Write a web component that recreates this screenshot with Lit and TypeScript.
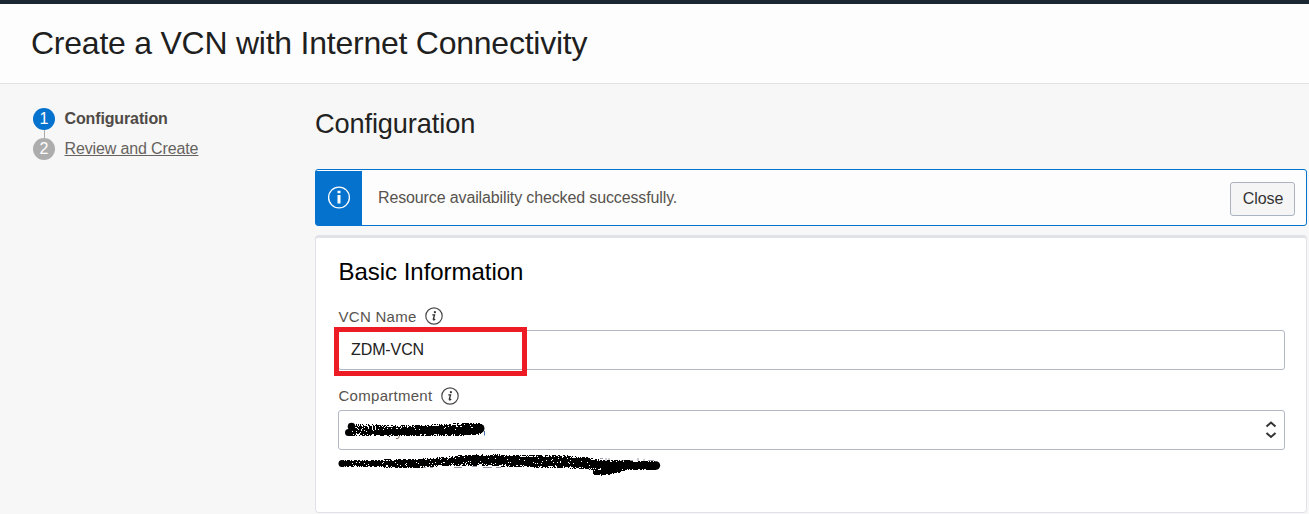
import { LitElement, html, svg, css } from "lit";
import { customElement } from "lit/decorators.js";

const infoIcon = html`<svg class="info" viewBox="0 0 18 18" width="18" height="18">
  <circle cx="9" cy="9" r="8.2" fill="none" stroke="#4a4a4a" stroke-width="1.2" />
  <circle cx="9.9" cy="5.2" r="1.1" fill="#333" />
  <path d="M7.3 7.9h2.2L8.400 12.100q-.2 1 .6.7l1.200-.7" fill="none" stroke="#333" stroke-width="1.400" />
</svg>`;

// Redaction marks: a dense core with a deterministic rough grain at its edges.
type Pt = [number, number, number, number]; // x, y, half height, density
const grain = (pts: Pt[], seed: number) => {
  let s = seed;
  const rnd = () => (s = (s * 16807) % 2147483647) / 2147483647;
  for (let i = 0; i < 8; i++) rnd();
  let d = "";
  for (let i = 0; i < pts.length - 1; i++) {
    const [x0, y0, h0, k0] = pts[i];
    const [x1, y1, h1, k1] = pts[i + 1];
    for (let x = x0; x < x1; x++) {
      const t = (x - x0) / (x1 - x0);
      const y = y0 + (y1 - y0) * t, h = h0 + (h1 - h0) * t, k = k0 + (k1 - k0) * t;
      for (let yy = Math.round(y - h); yy < Math.round(y + h); yy++) {
        const edge = Math.abs(yy + 0.5 - y) / h;
        if (rnd() < (edge > 0.72 ? k * k * 0.7 : k)) d += `M${x} ${yy}h1v1h-1z`;
      }
    }
  }
  return svg`<path d=${d} fill="#000" shape-rendering="crispEdges" />`;
};

const nameMark: Pt[] = [[10, 14, 6, 0.9], [16, 14, 6, 0.85], [32, 14, 6, 0.82], [50, 15, 5.5, 0.88], [80, 14.5, 5.5, 0.9], [105, 14, 6, 0.9], [125, 13, 6.5, 0.95], [143, 12.5, 5.500, 1]];
const nameCore: Pt[] = [[24, 16, 3, 0.8], [42, 16, 3, 0.95], [75, 16, 3, 0.95], [110, 15, 3.500, 0.97], [140, 15, 3.500, 1]];
const pathMark: Pt[] = [[3, 13.5, 3.500, 1], [12, 13.500, 3.500, 0.95], [45, 13.500, 4, 0.94], [78, 13.500, 4.500, 0.95], [105, 11.500, 4.500, 0.94], [128, 10, 5.500, 0.96], [162, 10.500, 6, 0.97], [230, 12, 6.500, 0.95], [250, 13.500, 6, 0.98], [265, 15, 5, 1], [318, 15.500, 4.500, 1]];
const tailMark: Pt[] = [[255, 22, 2.500, 0.93], [263, 22.500, 3, 0.95], [275, 21, 3, 0.95], [287, 19, 2, 0.9]];

@customElement("app-root")
export class AppRoot extends LitElement {
  static styles = css`
    :host { display: block; height: 514px; overflow: hidden; background: #f7f7f7; font: 16px/20px "Liberation Sans", Arial, sans-serif; color: #222; }
    * { box-sizing: border-box; }
    h1, h2, h3 { margin: 0; font-weight: 400; }
    header { height: 84px; border-top: 4px solid #1b2733; border-bottom: 1px solid #e2e2e2; background: #fdfdfd; padding: 21px 0 0 31px; }
    h1 { font-size: 32px; line-height: 37px; letter-spacing: -.24px; color: #1f1f1f; }
    .body { display: grid; grid-template-columns: 315px 992px; }
    nav { padding: 24px 0 0 33px; }
    .step { display: flex; align-items: center; gap: 9.5px; height: 22px; }
    .num { width: 22px; height: 22px; border-radius: 50%; background: #0572ce; color: #fff; text-align: center; line-height: 22px; }
    .num.off { background: #adadad; }
    .on { font-weight: 700; color: #4f4a46; letter-spacing: -.13px; }
    .line { width: 1px; height: 8px; margin-left: 11px; background: #aaa; }
    .link { color: #66625e; text-decoration: underline; letter-spacing: -.13px; }
    h2 { font-size: 27.2px; line-height: 32px; margin-top: 24px; letter-spacing: -.12px; }
    .alert { display: flex; align-items: center; height: 57px; margin-top: 29px; border: 1px solid #0572ce; border-radius: 3px; background: #fdfdfd; padding-right: 11px; }
    .badge { display: flex; align-items: center; justify-content: center; width: 46px; height: 54px; align-self: flex-end; background: #0572ce; }
    .msg { flex: 1; margin-left: 16px; color: #57534e; letter-spacing: -.13px; }
    button { width: 65px; height: 34px; margin-top: 2px; padding: 0 0 0 1px; border: 1px solid #a9b3c1; border-radius: 3px; background: #f5f5f5; font: inherit; color: #333; letter-spacing: -.1px; }
    .card { height: 278px; margin-top: 9px; border: 1px solid #e1e2e8; border-top-width: 3px; border-radius: 4px; background: #fff; padding: 20px 21px 0 22px; }
    h3 { font-size: 24px; line-height: 28px; color: #000; letter-spacing: -.03px; margin-left: .5px; }
    .label { display: flex; align-items: center; gap: 9px; height: 20px; font-size: 15px; letter-spacing: .28px; color: #57534e; }
    .label span { margin-left: .5px; margin-right: -.5px; }
    .first { margin-top: 20px; }
    .first span { padding-top: 2px; }
    .second { margin-top: 16px; }
    .field { position: relative; display: flex; align-items: center; justify-content: space-between; height: 40px; margin-top: 4px; border: 1px solid #b1b8c4; border-radius: 3px; padding: 0 7px 0 12px; color: #222; letter-spacing: -.1px; }
    .frame { position: absolute; left: -5px; top: -4px; width: 193px; height: 49px; border: 5px solid #ed1c24; }
    .select { padding: 0 7px 1px 0; }
    svg { display: block; }
  `;

  render() {
    return html`
      <header><h1>Create a VCN with Internet Connectivity</h1></header>
      <div class="body">
        <nav>
          <div class="step"><span class="num">1</span><span class="on">Configuration</span></div>
          <div class="line"></div>
          <div class="step"><span class="num off">2</span><span class="link">Review and Create</span></div>
        </nav>
        <main>
          <h2>Configuration</h2>
          <div class="alert">
            <div class="badge">
              <svg width="24" height="24" viewBox="0 0 24 24" fill="none" stroke="#fff">
                <circle cx="12" cy="11.5" r="10.4" stroke-width="1.3" />
                <path d="M12 4.800v2.500M12 9v8.600" stroke-width="3" />
              </svg>
            </div>
            <span class="msg">Resource availability checked successfully.</span>
            <button>Close</button>
          </div>
          <section class="card">
            <h3>Basic Information</h3>
            <div class="label first"><span>VCN Name</span>${infoIcon}</div>
            <div class="field"><span>ZDM-VCN</span><span class="frame"></span></div>
            <div class="label second"><span>Compartment</span>${infoIcon}</div>
            <div class="field select">
              <svg width="155" height="28" viewBox="0 0 155 28">
                <path d="M60 20v1.500q-1 1.500-3 1" fill="none" stroke="#8b6a56" />
                <path d="M145.500 15v4.500" stroke="#3f6fa8" />
                <circle cx="12.500" cy="10.500" r="3.800" />
                <circle cx="9.500" cy="16.500" r="3.500" />
                <circle cx="141" cy="12.500" r="4.500" />
                ${grain(nameMark, 7123)}${grain(nameCore, 9341)}
              </svg>
              <svg width="12" height="18" viewBox="0 0 12 18" fill="none" stroke="#333" stroke-width="2">
                <path d="M1.500 5.500L6 1.500l4.500 4M1.500 12L6 16l4.500-4" />
              </svg>
            </div>
            <svg width="330" height="28" viewBox="0 0 330 28">
              <path d="M83 17.500h5M92 17.500h3M116 17.500h8M134 16.500h5M145 17.500h9M158 17.500h5" stroke="#9b97a6" />
              <path d="M262 8.500h3M268 8v3M271 8v3M276 10.500h3M283 10.500h4M291 10.500h4M300 8v3M306 9v2M310 10.500h6" fill="none" stroke="#9b9aa8" />
              <circle cx="4" cy="13.500" r="3.500" />
              <circle cx="318" cy="15.500" r="4.200" />
              ${grain(pathMark, 1931)}${grain(tailMark, 4337)}
            </svg>
          </section>
        </main>
      </div>
    `;
  }
}
